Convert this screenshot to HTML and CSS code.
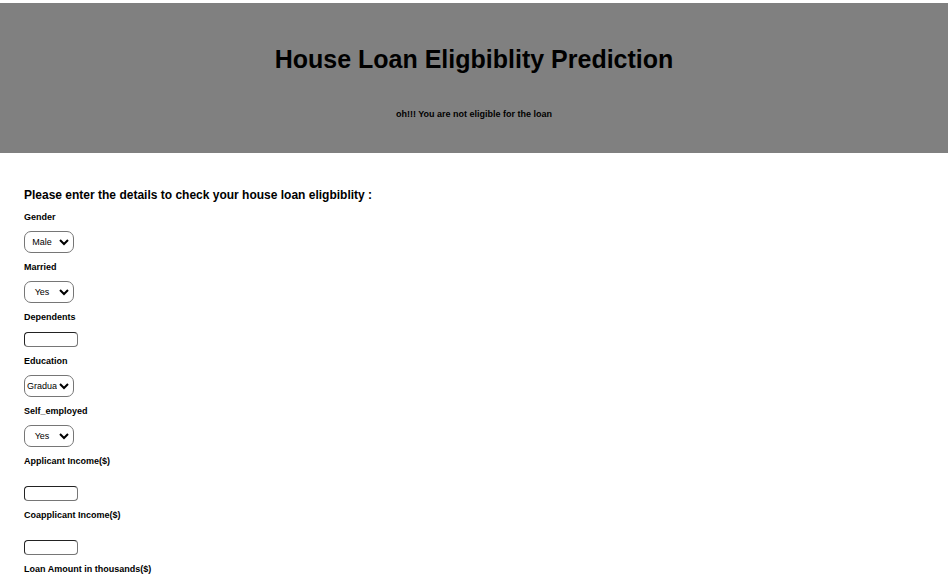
FILE: index.html
```html
<!DOCTYPE html>
<html lang="en">
<head>
<meta charset="utf-8">
<title>House Loan Eligbiblity Prediction</title>
<link rel="stylesheet" href="styles.css">
</head>
<body>
<header class="banner">
  <h1>House Loan Eligbiblity Prediction</h1>
  <p class="result">oh!!! You are not eligible for the loan</p>
</header>
<form class="details">
  <h2>Please enter the details to check your house loan eligbiblity :</h2>
  <div class="field"><label for="gender">Gender</label><select id="gender"><option>Male</option><option>Female</option></select></div>
  <div class="field"><label for="married">Married</label><select id="married"><option>Yes</option><option>No</option></select></div>
  <div class="field entry"><label for="dependents">Dependents</label><input id="dependents" type="text"></div>
  <div class="field"><label for="education">Education</label><select id="education"><option>Graduate</option><option>Not Graduate</option></select></div>
  <div class="field"><label for="employed">Self_employed</label><select id="employed"><option>Yes</option><option>No</option></select></div>
  <div class="field entry spaced"><label for="income">Applicant Income($)</label><input id="income" type="text"></div>
  <div class="field entry spaced"><label for="coincome">Coapplicant Income($)</label><input id="coincome" type="text"></div>
  <div class="field entry spaced"><label for="amount">Loan Amount in thousands($)</label><input id="amount" type="text"></div>
</form>
</body>
</html>
```
FILE: styles.css
```css
body {
  margin: 3px 0 0;
  background: #fff;
  color: #000;
  font-family: "Liberation Sans", Arial, sans-serif;
}
.banner {
  padding: 40px 24px 32px;
  background: #808080;
  text-align: center;
}
h1 {
  margin: 0;
  font-size: 25px;
  line-height: 32px;
}
.result {
  margin: 32px 0 0;
  font-size: 9px;
  line-height: 14px;
  font-weight: bold;
}
.details {
  padding: 34px 24px;
}
h2 {
  margin: 0 0 8px;
  font-size: 12px;
  line-height: 16px;
}
.field {
  display: flex;
  flex-direction: column;
  align-items: flex-start;
  gap: 8px;
  margin-bottom: 8px;
}
.entry {
  gap: 9px;
}
.spaced {
  gap: 19px;
}
label {
  font-size: 9px;
  line-height: 12px;
  font-weight: bold;
}
select,
input {
  box-sizing: border-box;
  margin: 0;
  border: 1px solid #767676;
  background: #fff;
  color: #000;
  font: 9px "Liberation Sans", Arial, sans-serif;
}
select {
  width: 50px;
  height: 22px;
  padding: 0 16px 0 2px;
  border-radius: 7px;
  text-align: center;
  appearance: none;
  background: #fff url("data:image/svg+xml,%3Csvg xmlns='http://www.w3.org/2000/svg' width='10' height='8' viewBox='0 0 10 8'%3E%3Cpath d='M1 2l4 4 4-4' fill='none' stroke='%23000' stroke-width='2'/%3E%3C/svg%3E") no-repeat right 4px center;
}
input {
  width: 54px;
  height: 15px;
  border-color: #222 #767676 #767676 #222;
  border-radius: 4px;
}
```
